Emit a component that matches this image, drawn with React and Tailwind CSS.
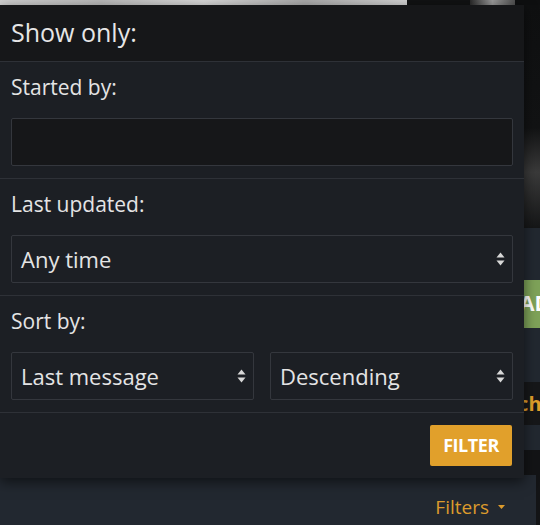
const FONT = { fontFamily: '"Open Sans", "Noto Sans", sans-serif' };

function Arrows() {
  return (
    <svg width="9" height="14" viewBox="0 0 9 14" className="shrink-0">
      <path d="M4.5 0.5 L8.5 5.5 L0.5 5.5 Z" fill="#d8d8d8" />
      <path d="M4.5 13.5 L8.5 8.5 L0.5 8.5 Z" fill="#d8d8d8" />
    </svg>
  );
}

function Select({ value, className = '' }) {
  return (
    <div
      className={`h-[48px] flex items-center justify-between pl-[9px] pr-[7px] border border-[#34373d] rounded-[2px] text-[22px] text-[#e4e4e4] ${className}`}
    >
      <span>{value}</span>
      <Arrows />
    </div>
  );
}

function Section({ label, children }) {
  return (
    <div className="px-[11px] pt-3 pb-3 border-b border-[#2e3137]">
      <div className="h-[28px] mb-4 flex items-center text-[21px] text-[#e4e4e4]">{label}</div>
      {children}
    </div>
  );
}

function Popup() {
  return (
    <div className="absolute left-0 top-[5px] w-[524px] bg-[#1c1f24] shadow-[0_4px_12px_rgba(0,0,0,0.55)]">
      <div className="h-[57px] px-[11px] flex items-center bg-[#161719] border-b border-[#2e3137] text-[25px] text-[#e6e6e6]">
        Show only:
      </div>
      <Section label="Started by:">
        <div className="h-[48px] bg-[#161719] border border-[#34373d] rounded-[2px]" />
      </Section>
      <Section label="Last updated:">
        <Select value="Any time" />
      </Section>
      <Section label="Sort by:">
        <div className="flex gap-4">
          <Select value="Last message" className="flex-1" />
          <Select value="Descending" className="flex-1" />
        </div>
      </Section>
      <div className="px-3 pt-3 pb-3 flex justify-end">
        <button className="h-[41px] w-[82px] bg-[#e1a02b] rounded-[2px] text-white font-bold text-[18px] tracking-tight">
          FILTER
        </button>
      </div>
    </div>
  );
}

export default function App() {
  return (
    <div className="relative w-[540px] h-[525px] overflow-hidden bg-[#222830]" style={FONT}>
      {/* page behind the menu */}
      <div className="h-[228px] bg-[#0e0f10] flex flex-col">
        <div className="h-[5px] flex">
          <div className="w-[407px] bg-[linear-gradient(90deg,#cfcfcf,#b9b9b9,#d8d8d8,#aaaaaa,#d2d2d2)]" />
          <div className="w-[63px] bg-[#111213]" />
          <div className="w-[45px] bg-[linear-gradient(90deg,#2a2a2a,#9a9a9a,#505050)]" />
        </div>
        <div className="flex-1 bg-[linear-gradient(180deg,#0f1011_0%,#121314_55%,#3a3a3a_75%,#151617_100%)]" />
      </div>
      <div className="h-[52px]" />
      <div className="h-[48px] flex justify-end">
        <div className="w-[140px] bg-[#7ea259] flex items-center pl-[120px] text-white font-bold text-[21px] whitespace-nowrap">
          ADD
        </div>
      </div>
      <div className="h-[54px]" />
      <div className="h-[43px] bg-[#161719] flex items-center pl-[478px] text-[#e1a02b] font-bold text-[20px] whitespace-nowrap">
        Watch
      </div>
      <div className="h-[25px]" />
      <div className="h-[25px] bg-[#131416]" />
      <div className="h-[50px] flex">
        <div className="w-[536px] flex items-center justify-end pr-[31px] pt-[14px] gap-[9px] text-[#dc9b2c] text-[19px]">
          <span>Filters</span>
          <svg width="7" height="4" viewBox="0 0 7 4">
            <path d="M0 0 L7 0 L3.5 4 Z" fill="#dc9b2c" />
          </svg>
        </div>
        <div className="flex-1 bg-[#131416]" />
      </div>
      <Popup />
    </div>
  );
}
